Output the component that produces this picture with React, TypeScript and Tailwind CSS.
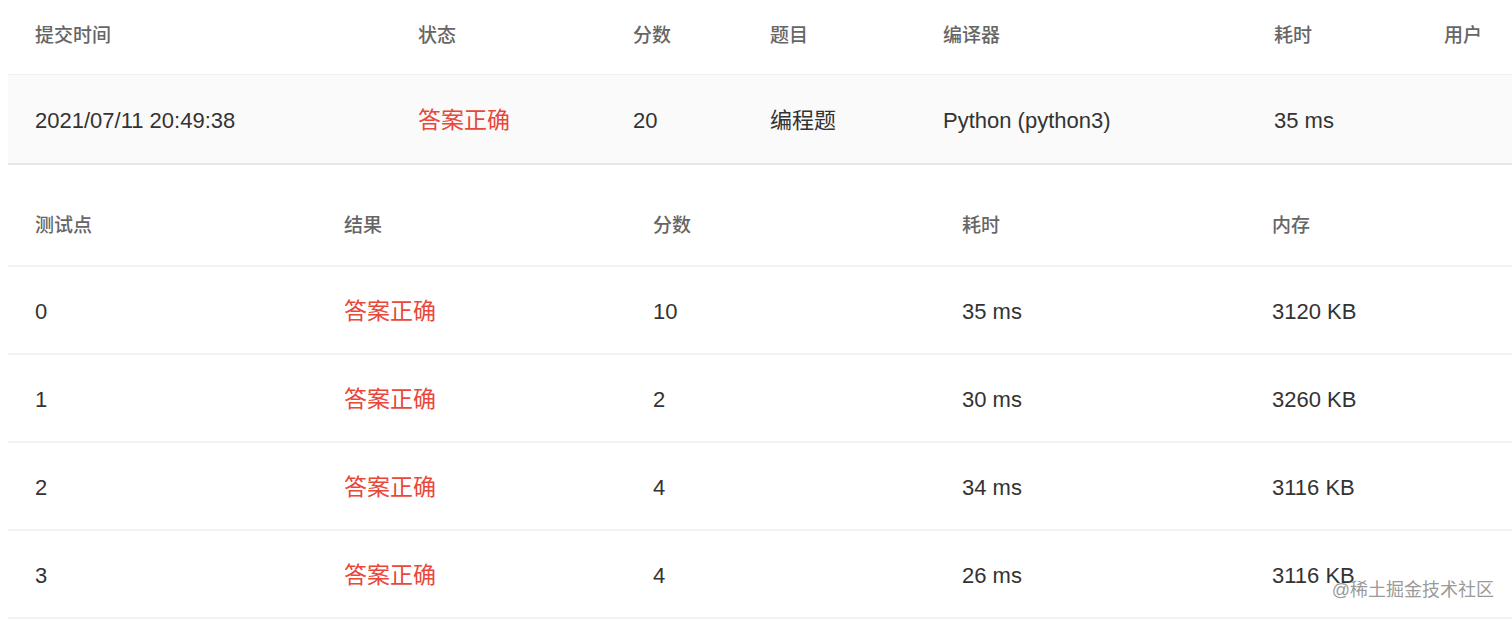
const font = "font-['Liberation_Sans','Noto_Sans_CJK_SC',sans-serif]";

const summaryCols = "grid grid-cols-[383px_215px_137px_173px_331px_170px_1fr]";
const caseCols = "grid grid-cols-[309px_309px_309px_310px_1fr]";

const cases = [
  { id: "0", score: "10", time: "35 ms", mem: "3120 KB" },
  { id: "1", score: "2", time: "30 ms", mem: "3260 KB" },
  { id: "2", score: "4", time: "34 ms", mem: "3116 KB" },
  { id: "3", score: "4", time: "26 ms", mem: "3116 KB" },
];

function Head({ children }: { children: React.ReactNode }) {
  return <div className="pl-[27px] text-[19px] font-medium text-[#666]">{children}</div>;
}

function Cell({ children, red }: { children: React.ReactNode; red?: boolean }) {
  return (
    <div className={red ? "pl-[27px] text-[23px] text-[#e8473a]" : "pl-[27px] text-[22px] text-[#333]"}>
      {children}
    </div>
  );
}

export default function App() {
  return (
    <div className={`relative h-[620px] w-[1512px] overflow-hidden bg-white pl-2 ${font}`}>
      {/* 提交信息 */}
      <div className={`${summaryCols} h-[75px] items-center border-b border-[#f0f0f0] pb-[2px]`}>
        <Head>提交时间</Head>
        <Head>状态</Head>
        <Head>分数</Head>
        <Head>题目</Head>
        <Head>编译器</Head>
        <Head>耗时</Head>
        <Head>用户</Head>
      </div>
      <div className={`${summaryCols} h-[90px] items-center border-b-2 border-[#e8e8e8] bg-[#fafafa] pt-[2px]`}>
        <Cell>2021/07/11 20:49:38</Cell>
        <Cell red>答案正确</Cell>
        <Cell>20</Cell>
        <Cell>编程题</Cell>
        <Cell>Python (python3)</Cell>
        <Cell>35 ms</Cell>
        <Cell> </Cell>
      </div>

      {/* 测试点 */}
      <div className="mt-[20px]">
        <div className={`${caseCols} h-[82px] items-center border-b-2 border-[#f2f2f2] pt-[2px]`}>
          <Head>测试点</Head>
          <Head>结果</Head>
          <Head>分数</Head>
          <Head>耗时</Head>
          <Head>内存</Head>
        </div>
        {cases.map((c) => (
          <div key={c.id} className={`${caseCols} h-[88px] items-center border-b-2 border-[#f2f2f2] pt-[2px]`}>
            <Cell>{c.id}</Cell>
            <Cell red>答案正确</Cell>
            <Cell>{c.score}</Cell>
            <Cell>{c.time}</Cell>
            <Cell>{c.mem}</Cell>
          </div>
        ))}
      </div>

      <div className="absolute right-[18px] top-[577px] text-[18px] text-[#9a9a9a]">@稀土掘金技术社区</div>
    </div>
  );
}
